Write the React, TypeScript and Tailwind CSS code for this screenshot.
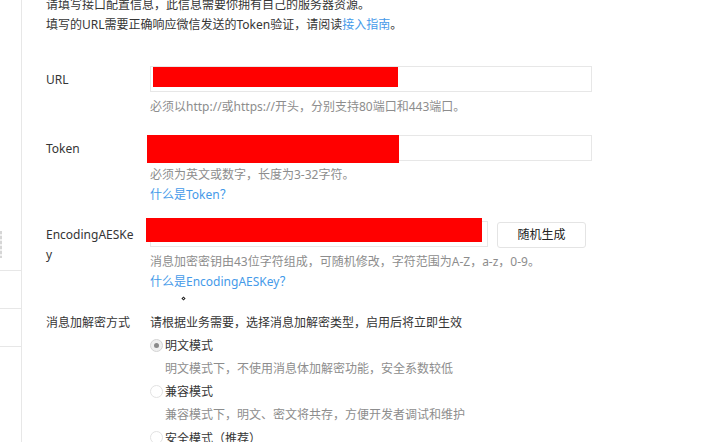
import React from 'react'

// Server config form (URL / Token / EncodingAESKey / encryption mode)

const FONT = { fontFamily: '"Noto Sans", "Noto Sans CJK SC", sans-serif' }

// full-width punctuation should come from the CJK face
function Cjk({ children }: { children: React.ReactNode }) {
  return <span className="font-['Noto_Sans_CJK_SC',sans-serif]">{children}</span>
}

function Redact({ className }: { className: string }) {
  return <div className={`absolute bg-[#ff0000] ${className}`} />
}

function Radio({ checked, children }: { checked?: boolean; children: React.ReactNode }) {
  return (
    <div className="flex h-[23px] items-center overflow-hidden">
      <span
        className={`flex h-[13px] w-[13px] items-center justify-center rounded-full border ${
          checked ? 'border-[#d4d4d4] bg-[#f0f0f0]' : 'border-[#e2e2e2] bg-white'
        }`}
      >
        {checked && <span className="h-[5px] w-[5px] rounded-full bg-[#8a8a8a]" />}
      </span>
      <span className="ml-[2px] text-[#353535]">{children}</span>
    </div>
  )
}

export default function App() {
  return (
    <div style={FONT} className="flex h-[442px] w-[705px] overflow-hidden bg-white text-[12px] text-[#353535]">
      {/* left nav edge */}
      <div className="w-[22px] shrink-0 border-r border-[#e7e7e7] pt-[231px]">
        <div className="h-[27px] w-[2px] bg-[repeating-linear-gradient(#d6d6d6_0_3px,#f2f2f2_3px_5px)]" />
        <div className="h-[13px] border-b border-[#e7e7e7]" />
        <div className="h-[38px] border-b border-[#e7e7e7]" />
        <div className="h-[38px] border-b border-[#e7e7e7]" />
      </div>

      <div className="flex-1 pl-[24px]">
        <div className="mt-[-5px] leading-[20px]">
          <p>请填写接口配置信息，此信息需要你拥有自己的服务器资源。</p>
          <p>
            填写的URL需要正确响应微信发送的Token验证，请阅读<a className="text-[#459ae9]">接入指南</a>。
          </p>
        </div>

        {/* URL */}
        <div className="mt-[31px] flex">
          <label className="w-[104px] shrink-0 pt-[4px] leading-[20px]">URL</label>
          <div>
            <div className="relative h-[26px] w-[442px] border border-[#e7e7e7]">
              <Redact className="left-[2px] top-0 h-[20px] w-[245px]" />
            </div>
            <p className="mt-[5px] leading-[19px] text-[#8d8d8d]">
              必须以http://或https://开头，分别支持80端口和443端口。
            </p>
          </div>
        </div>

        {/* Token */}
        <div className="mt-[19px] flex">
          <label className="w-[104px] shrink-0 pt-[4px] leading-[20px]">Token</label>
          <div>
            <div className="relative h-[26px] w-[442px] border border-[#e7e7e7]">
              <Redact className="-left-[4px] -top-[1px] h-[28px] w-[252px]" />
            </div>
            <div className="mt-[4px] leading-[19px]">
              <p className="text-[#8d8d8d]">必须为英文或数字，长度为3-32字符。</p>
              <a className="block h-[19px] text-[#459ae9]">
                什么是Token<Cjk>？</Cjk>
              </a>
            </div>
          </div>
        </div>

        {/* EncodingAESKey */}
        <div className="mt-[18px] flex">
          <label className="w-[104px] shrink-0 break-all pr-[14px] pt-[4px] leading-[20px]">EncodingAESKey</label>
          <div className="relative">
            <div className="flex">
              <div className="relative h-[26px] w-[338px] border border-[#e7e7e7]">
                <Redact className="-left-[5px] -top-[4px] h-[24px] w-[336px]" />
              </div>
              <button className="ml-[9px] mt-[1px] h-[26px] w-[89px] rounded-[3px] border border-[#e4e4e4] bg-white text-[12px] text-[#222]">
                随机生成
              </button>
            </div>
            <div className="mt-[4px] leading-[19px]">
              <p className="text-[#8d8d8d]">消息加密密钥由43位字符组成，可随机修改，字符范围为A-Z，a-z，0-9。</p>
              <a className="block h-[19px] text-[#459ae9]">
                什么是EncodingAESKey<Cjk>？</Cjk>
              </a>
            </div>
            <span className="absolute left-[32px] top-[76px] h-[3px] w-[3px] rotate-45 border border-[#222]" />
          </div>
        </div>

        {/* encryption mode */}
        <div className="mt-[21px] flex leading-[23px]">
          <label className="w-[104px] shrink-0">消息加解密方式</label>
          <div>
            <p className="h-[23px]">请根据业务需要，选择消息加解密类型，启用后将立即生效</p>
            <Radio checked>明文模式</Radio>
            <p className="h-[23px] pl-[15px] text-[#8d8d8d]">明文模式下，不使用消息体加解密功能，安全系数较低</p>
            <Radio>兼容模式</Radio>
            <p className="h-[23px] pl-[15px] text-[#8d8d8d]">兼容模式下，明文、密文将共存，方便开发者调试和维护</p>
            <Radio>
              安全模式<Cjk>（推荐）</Cjk>
            </Radio>
          </div>
        </div>
      </div>
    </div>
  )
}
